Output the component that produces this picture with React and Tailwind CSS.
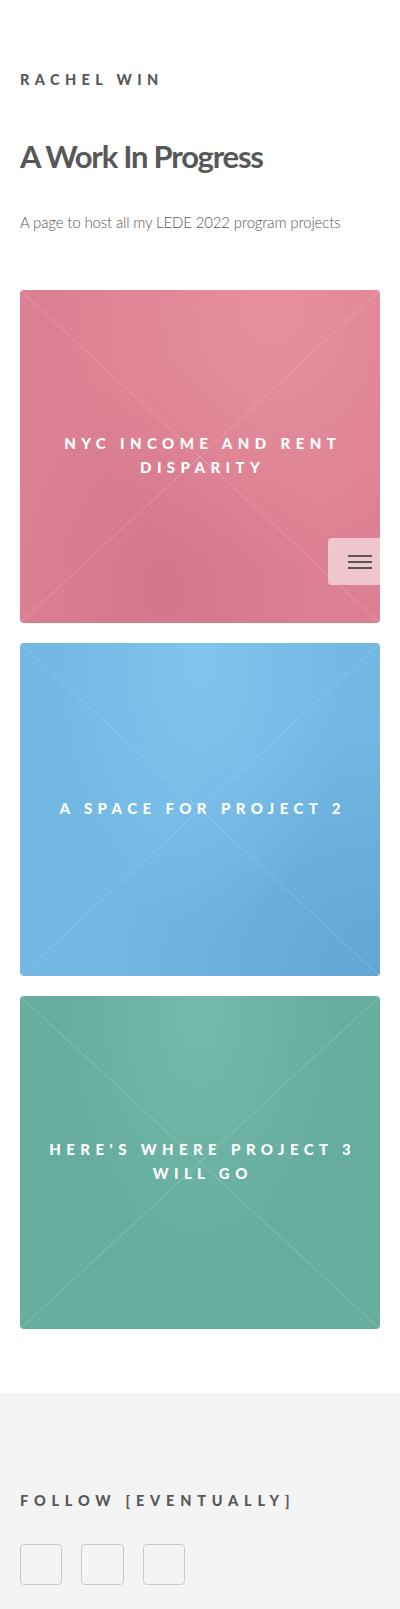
import React from 'react';

const projects = [
  {
    title: 'NYC Income and Rent Disparity',
    color: 'bg-[#dc8193]',
    glow: 'bg-[radial-gradient(ellipse_at_70%_5%,rgba(236,150,162,0.7),transparent_60%),radial-gradient(ellipse_at_40%_90%,rgba(200,105,130,0.45),transparent_55%)]',
  },
  {
    title: 'A Space for Project 2',
    color: 'bg-[#73b8e3]',
    glow: 'bg-[radial-gradient(ellipse_at_50%_5%,rgba(132,200,240,0.8),transparent_60%),radial-gradient(ellipse_at_100%_100%,rgba(95,160,208,0.8),transparent_55%)]',
  },
  {
    title: "Here's where Project 3 will go",
    color: 'bg-[#67ad9f]',
    glow: 'bg-[radial-gradient(ellipse_at_50%_5%,rgba(120,190,174,0.8),transparent_55%)]',
  },
];

const Tile = ({ title, color, glow }) => (
  <div className={`relative h-[333px] rounded-[4px] overflow-hidden ${color}`}>
    <div className={`absolute inset-0 ${glow}`}></div>
    {/* placeholder image X */}
    <svg className="absolute inset-0 w-full h-full" viewBox="0 0 100 100" preserveAspectRatio="none">
      <line x1="0" y1="0" x2="100" y2="100" stroke="rgba(255,255,255,0.22)" strokeWidth="1" vectorEffect="non-scaling-stroke" />
      <line x1="100" y1="0" x2="0" y2="100" stroke="rgba(255,255,255,0.22)" strokeWidth="1" vectorEffect="non-scaling-stroke" />
    </svg>
    <div className="relative h-full flex items-center justify-center px-[20px] pb-[4px]">
      <h2 className="text-white text-center uppercase font-black text-[15px] leading-[24px] tracking-[0.36em] pl-[0.36em]">
        {title}
      </h2>
    </div>
  </div>
);

const App = () => {
  return (
    <div className="relative min-h-screen bg-white text-[#585858] font-['Lato','Open_Sans',sans-serif]">
      {/* Header */}
      <header className="px-5 pt-[70px]">
        <p className="uppercase font-black text-[14.5px] leading-[20px] tracking-[0.37em]">Rachel Win</p>
      </header>

      {/* Menu toggle */}
      <button className="absolute z-10 top-[538px] right-0 w-[72px] h-[47px] bg-[rgba(255,255,255,0.55)] rounded-l-[4px] flex flex-col justify-center gap-[4px] pl-[20px]">
        <span className="block w-[24px] h-[2px] bg-[#555555]"></span>
        <span className="block w-[24px] h-[2px] bg-[#555555]"></span>
        <span className="block w-[24px] h-[2px] bg-[#555555]"></span>
      </button>

      {/* Intro */}
      <main className="px-5">
        <h1 className="mt-[46px] text-[31px] leading-[40px] font-bold tracking-[-0.04em]">A Work In Progress</h1>
        <p className="mt-[34px] text-[15px] leading-[24px] font-light tracking-[-0.01em]">
          A page to host all my LEDE 2022 program projects
        </p>

        <section className="mt-[56px] flex flex-col gap-[20px]">
          {projects.map((p) => (
            <Tile key={p.title} {...p} />
          ))}
        </section>
      </main>

      {/* Footer */}
      <footer className="mt-[64px] bg-[#f4f4f4] px-5 pt-[98px] pb-[25px]">
        <h2 className="uppercase font-black text-[14.5px] leading-[20px] tracking-[0.4em]">Follow [eventually]</h2>
        <div className="mt-[33px] flex gap-[19px]">
          <div className="w-[42px] h-[41px] border border-[#c9c9c9] rounded-[4px]"></div>
          <div className="w-[43px] h-[41px] border border-[#c9c9c9] rounded-[4px]"></div>
          <div className="w-[42px] h-[41px] border border-[#c9c9c9] rounded-[4px]"></div>
        </div>
      </footer>
    </div>
  );
};

export default App;
